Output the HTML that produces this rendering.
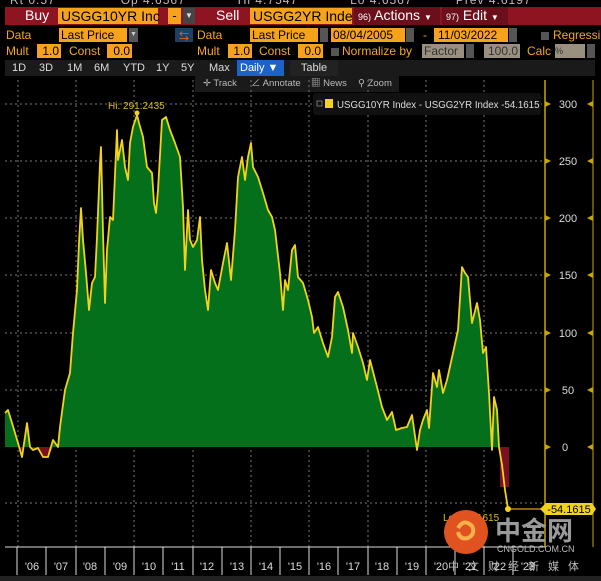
<!DOCTYPE html>
<html><head><meta charset="utf-8"><style>
*{margin:0;padding:0;box-sizing:border-box}
body{width:601px;height:581px;background:#000;overflow:hidden;font-family:"Liberation Sans","Noto Sans CJK SC",sans-serif;position:relative;color:#f5a623}
.a{position:absolute;white-space:nowrap}
.o{background:#f7a21b;color:#000}
.red{background:#8e1422}
.t{font-size:12px}
</style></head><body>
<div class="a" style="top:-7px;left:10px;font-size:12px;color:#bbb;letter-spacing:1px">Rt 0.57 &nbsp;&nbsp;&nbsp;&nbsp;&nbsp;&nbsp;&nbsp;&nbsp;&nbsp;&nbsp;&nbsp;&nbsp;&nbsp;&nbsp;Op 4.6567 &nbsp;&nbsp;&nbsp;&nbsp;&nbsp;&nbsp;&nbsp;&nbsp;&nbsp;&nbsp;&nbsp;Hi 4.7547 &nbsp;&nbsp;&nbsp;&nbsp;&nbsp;&nbsp;&nbsp;&nbsp;&nbsp;&nbsp;&nbsp;Lo 4.6567 &nbsp;&nbsp;&nbsp;&nbsp;&nbsp;&nbsp;&nbsp;&nbsp;&nbsp;Prev 4.6197</div>
<div class="a red" style="top:7px;left:5px;width:596px;height:18px"></div>
<div class="a" style="top:7px;left:25px;font-size:14px;color:#fff">Buy</div>
<div class="a o" style="top:8px;left:58px;width:100px;height:16px;font-size:14px;line-height:16px;padding-left:3px">USGG10YR Inc</div>
<div class="a o" style="top:8px;left:168px;width:13px;height:16px;font-size:13px;text-align:center">-</div>
<div class="a" style="top:8px;left:183px;width:12px;height:16px;background:#444;color:#ddd;font-size:8px;text-align:center;line-height:16px">▼</div>
<div class="a" style="top:7px;left:216px;font-size:14px;color:#fff">Sell</div>
<div class="a o" style="top:8px;left:250px;width:102px;height:16px;font-size:14px;line-height:16px;padding-left:3px;overflow:hidden">USGG2YR Inde</div>
<div class="a" style="top:7px;left:354px;width:86px;height:18px;background:#6b0f1a"></div>
<div class="a" style="top:7px;left:358px;font-size:14px;color:#fff"><span style="font-size:9px">96)</span> Actions <span style="font-size:8px">▼</span></div>
<div class="a" style="top:7px;left:442px;width:66px;height:18px;background:#6b0f1a"></div>
<div class="a" style="top:7px;left:446px;font-size:14px;color:#fff"><span style="font-size:9px">97)</span> Edit <span style="font-size:8px">▼</span></div>

<div class="a t" style="top:28px;left:6px">Data</div>
<div class="a o t" style="top:28px;left:59px;width:68px;height:14px;line-height:14px;padding-left:2px">Last Price</div>
<div class="a" style="top:28px;left:129px;width:9px;height:14px;background:#555;color:#ccc;font-size:7px;line-height:14px;text-align:center">▼</div>
<div class="a" style="top:28px;left:175px;width:18px;height:14px;background:#1d3f66;color:#f60;font-size:10px;text-align:center">⇆</div>
<div class="a t" style="top:28px;left:197px">Data</div>
<div class="a o t" style="top:28px;left:250px;width:68px;height:14px;line-height:14px;padding-left:2px">Last Price</div>
<div class="a" style="top:28px;left:320px;width:8px;height:14px;background:#555"></div>
<div class="a o t" style="top:28px;left:331px;width:74px;height:14px;line-height:14px;padding-left:2px">08/04/2005</div>
<div class="a" style="top:28px;left:406px;width:8px;height:14px;background:#555"></div>
<div class="a t" style="top:28px;left:423px">-</div>
<div class="a o t" style="top:28px;left:434px;width:74px;height:14px;line-height:14px;padding-left:4px">11/03/2022</div>
<div class="a" style="top:28px;left:509px;width:8px;height:14px;background:#555"></div>
<div class="a" style="top:32px;left:541px;width:8px;height:8px;background:#555"></div>
<div class="a t" style="top:28px;left:553px">Regressi</div>

<div class="a t" style="top:44px;left:6px">Mult</div>
<div class="a o t" style="top:44px;left:37px;width:24px;height:14px;line-height:14px;text-align:right;padding-right:2px">1.0</div>
<div class="a t" style="top:44px;left:69px">Const</div>
<div class="a o t" style="top:44px;left:107px;width:25px;height:14px;line-height:14px;text-align:right;padding-right:2px">0.0</div>
<div class="a t" style="top:44px;left:197px">Mult</div>
<div class="a o t" style="top:44px;left:228px;width:24px;height:14px;line-height:14px;text-align:right;padding-right:2px">1.0</div>
<div class="a t" style="top:44px;left:259px">Const</div>
<div class="a o t" style="top:44px;left:298px;width:25px;height:14px;line-height:14px;text-align:right;padding-right:2px">0.0</div>
<div class="a" style="top:48px;left:331px;width:8px;height:8px;background:#555"></div>
<div class="a t" style="top:44px;left:342px">Normalize by</div>
<div class="a t" style="top:44px;left:422px;width:42px;height:14px;background:#9a9080;color:#333;line-height:14px;padding-left:2px">Factor</div>
<div class="a" style="top:44px;left:466px;width:8px;height:14px;background:#555"></div>
<div class="a t" style="top:44px;left:484px;width:36px;height:14px;background:#9a9080;color:#333;line-height:14px;text-align:right;padding-right:2px">100.0</div>
<div class="a t" style="top:44px;left:527px">Calc</div>
<div class="a t" style="top:44px;left:555px;width:30px;height:14px;background:#9a9080;color:#333;font-size:9px;line-height:14px">%</div>
<div class="a" style="top:44px;left:587px;width:8px;height:14px;background:#555"></div>

<div class="a" style="top:60px;left:5px;width:590px;height:16px;background:#1a1a1a"></div>
<div class="a" style="top:60px;left:5px;height:16px;font-size:11px;color:#ddd;line-height:16px">
<span style="position:absolute;left:7px">1D</span><span style="position:absolute;left:34px">3D</span><span style="position:absolute;left:62px">1M</span><span style="position:absolute;left:89px">6M</span><span style="position:absolute;left:118px">YTD</span><span style="position:absolute;left:151px">1Y</span><span style="position:absolute;left:176px">5Y</span><span style="position:absolute;left:204px">Max</span></div>
<div class="a" style="top:60px;left:237px;width:47px;height:16px;background:#1d62c6;color:#fff;font-size:11px;line-height:16px;padding-left:3px">Daily ▼</div>
<div class="a" style="top:60px;left:290px;width:48px;height:16px;background:#222;color:#ddd;font-size:11px;line-height:16px;text-align:center">Table</div>
<div class="a" style="top:76px;left:195px;width:204px;height:16px;background:#1a1a1a;color:#bbb;font-size:9.5px;line-height:16px">
<span style="position:absolute;left:8px">✛ Track</span><span style="position:absolute;left:56px">∠ Annotate</span><span style="position:absolute;left:116px">▦ News</span><span style="position:absolute;left:163px">⚲ Zoom</span></div>

<svg class="a" style="top:0;left:0" width="601" height="581">
<defs>
<clipPath id="up"><rect x="0" y="80" width="545" height="367"/></clipPath>
<clipPath id="dn"><rect x="0" y="447" width="545" height="100"/></clipPath>
</defs>
<g stroke="#777" stroke-dasharray="2,3" stroke-width="1">
<line x1="5" y1="104" x2="545" y2="104"/><line x1="5" y1="161" x2="545" y2="161"/><line x1="5" y1="218" x2="545" y2="218"/><line x1="5" y1="275" x2="545" y2="275"/><line x1="5" y1="333" x2="545" y2="333"/><line x1="5" y1="390" x2="545" y2="390"/><line x1="5" y1="503" x2="545" y2="503"/>
<line x1="18" y1="80" x2="18" y2="547"/><line x1="76" y1="80" x2="76" y2="547"/><line x1="134" y1="80" x2="134" y2="547"/><line x1="193" y1="80" x2="193" y2="547"/><line x1="251" y1="80" x2="251" y2="547"/><line x1="309" y1="80" x2="309" y2="547"/><line x1="368" y1="80" x2="368" y2="547"/><line x1="426" y1="80" x2="426" y2="547"/><line x1="484" y1="80" x2="484" y2="547"/>
</g>
<polygon points="5,447 5,413 8,410 12,423 15,433 18,443 22,457 25,437 27,423 30,447 33,450 38,448 43,457 48,457 53,440 58,447 60,427 65,390 70,373 73,333 77,290 79,243 81,208 83,240 86,273 89,310 92,283 95,277 97,237 100,163 101,147 103,233 105,303 107,250 110,217 113,220 117,130 118,160 122,140 125,167 128,180 130,143 133,127 137,115 139,123 143,137 147,167 152,173 154,203 156,213 158,190 162,120 166,117 170,130 175,143 180,157 183,207 185,270 188,210 190,240 193,247 197,240 200,217 202,260 205,290 208,310 211,270 215,283 218,290 223,263 227,243 231,280 235,230 238,177 242,157 245,180 248,157 251,143 253,167 258,177 263,193 268,210 272,217 275,230 280,273 283,310 285,280 288,290 292,250 295,245 298,277 303,283 308,300 312,317 314,333 318,327 323,343 328,357 332,337 335,297 338,292 343,307 348,330 352,353 353,333 358,347 363,363 367,380 370,360 377,387 382,407 387,420 392,412 396,430 402,428 407,427 412,415 417,450 420,430 423,420 427,410 429,428 433,373 437,387 439,370 443,393 447,380 453,353 458,330 462,267 465,273 468,277 472,323 477,303 480,320 483,353 486,347 489,393 492,450 494,397 497,410 499,447 510,447" fill="#05701b" clip-path="url(#up)"/>
<polygon points="30,447 33,450 38,448 43,457 48,457 53,447" fill="#7a1020"/>
<polygon points="20,447 22,457 24,447" fill="#7a1020"/>
<rect x="500" y="447" width="9" height="40" fill="#7a1020"/>
<polyline fill="none" stroke="#f2d21a" stroke-width="1.8" stroke-linejoin="round" points="5,413 8,410 12,423 15,433 18,443 22,457 25,437 27,423 30,447 33,450 38,448 43,457 48,457 53,440 58,447 60,427 65,390 70,373 73,333 77,290 79,243 81,208 83,240 86,273 89,310 92,283 95,277 97,237 100,163 101,147 103,233 105,303 107,250 110,217 113,220 117,130 118,160 122,140 125,167 128,180 130,143 133,127 137,115 139,123 143,137 147,167 152,173 154,203 156,213 158,190 162,120 166,117 170,130 175,143 180,157 183,207 185,270 188,210 190,240 193,247 197,240 200,217 202,260 205,290 208,310 211,270 215,283 218,290 223,263 227,243 231,280 235,230 238,177 242,157 245,180 248,157 251,143 253,167 258,177 263,193 268,210 272,217 275,230 280,273 283,310 285,280 288,290 292,250 295,245 298,277 303,283 308,300 312,317 314,333 318,327 323,343 328,357 332,337 335,297 338,292 343,307 348,330 352,353 353,333 358,347 363,363 367,380 370,360 377,387 382,407 387,420 392,412 396,430 402,428 407,427 412,415 417,450 420,430 423,420 427,410 429,428 433,373 437,387 439,370 443,393 447,380 453,353 458,330 462,267 465,273 468,277 472,323 477,303 480,320 483,353 486,347 489,393 492,450 494,397 497,410 499,447 502,465 505,490 508,509"/>
<line x1="508" y1="509" x2="545" y2="509" stroke="#b8860b" stroke-width="1.5"/>
<circle cx="508" cy="509" r="3" fill="#f2d21a"/>
<circle cx="137" cy="113" r="2.5" fill="#f2d21a"/>
<text x="108" y="109" fill="#d8b814" font-size="10" font-family="Liberation Sans">Hi: 291.2435</text>
<text x="443" y="521" fill="#d8b814" font-size="10" font-family="Liberation Sans">Lo: -54.1615</text>
<line x1="545" y1="80" x2="545" y2="547" stroke="#c9a600" stroke-width="1.5"/>
<line x1="593" y1="80" x2="593" y2="547" stroke="#c9a600" stroke-width="1"/>
<g fill="#c9a600">
<polygon points="545,101 551,104 545,107"/><polygon points="545,158 551,161 545,164"/><polygon points="545,215 551,218 545,221"/><polygon points="545,272 551,275 545,278"/><polygon points="545,330 551,333 545,336"/><polygon points="545,387 551,390 545,393"/><polygon points="545,444 551,447 545,450"/>
<polygon points="593,101 587,104 593,107"/><polygon points="593,158 587,161 593,164"/><polygon points="593,215 587,218 593,221"/><polygon points="593,272 587,275 593,278"/><polygon points="593,330 587,333 593,336"/><polygon points="593,387 587,390 593,393"/><polygon points="593,444 587,447 593,450"/>
</g>
<g fill="#ddd" font-size="11" font-family="Liberation Sans" text-anchor="middle">
<text x="568" y="108">300</text><text x="568" y="165">250</text><text x="568" y="222">200</text><text x="568" y="279">150</text><text x="568" y="337">100</text><text x="568" y="394">50</text><text x="565" y="451">0</text>
</g>
<polygon points="540,509 546,503 592,503 596,509 592,515 546,515" fill="#f2d21a"/>
<text x="569" y="513" fill="#000" font-size="11" font-family="Liberation Sans" text-anchor="middle">-54.1615</text>
<line x1="5" y1="547" x2="545" y2="547" stroke="#ddd" stroke-width="1"/>
<g stroke="#ddd"><line x1="17" y1="547" x2="17" y2="575"/><line x1="46" y1="547" x2="46" y2="575"/><line x1="76" y1="547" x2="76" y2="575"/><line x1="105" y1="547" x2="105" y2="575"/><line x1="134" y1="547" x2="134" y2="575"/><line x1="163" y1="547" x2="163" y2="575"/><line x1="193" y1="547" x2="193" y2="575"/><line x1="222" y1="547" x2="222" y2="575"/><line x1="251" y1="547" x2="251" y2="575"/><line x1="280" y1="547" x2="280" y2="575"/><line x1="309" y1="547" x2="309" y2="575"/><line x1="338" y1="547" x2="338" y2="575"/><line x1="368" y1="547" x2="368" y2="575"/><line x1="397" y1="547" x2="397" y2="575"/><line x1="426" y1="547" x2="426" y2="575"/><line x1="455" y1="547" x2="455" y2="575"/><line x1="484" y1="547" x2="484" y2="575"/><line x1="513" y1="547" x2="513" y2="575"/></g>
<g fill="#ddd" font-size="11" font-family="Liberation Sans" text-anchor="middle">
<text x="32" y="570">'06</text><text x="61" y="570">'07</text><text x="90" y="570">'08</text><text x="120" y="570">'09</text><text x="149" y="570">'10</text><text x="178" y="570">'11</text><text x="207" y="570">'12</text><text x="237" y="570">'13</text><text x="266" y="570">'14</text><text x="295" y="570">'15</text><text x="324" y="570">'16</text><text x="353" y="570">'17</text><text x="382" y="570">'18</text><text x="412" y="570">'19</text><text x="441" y="570">'20</text><text x="470" y="570">'21</text><text x="499" y="570">'22</text><text x="528" y="570">'23</text></g>
<rect x="0" y="576" width="601" height="5" fill="#222"/>
<rect x="313" y="93" width="228" height="22" rx="3" fill="#111"/>
<rect x="317" y="101" width="5" height="5" fill="none" stroke="#888" stroke-width="0.8"/>
<rect x="325" y="99" width="8" height="9" fill="#f2d21a"/>
<text x="337" y="108" fill="#ddd" font-size="9.7" font-family="Liberation Sans">USGG10YR Index - USGG2YR Index -54.1615</text>
<circle cx="466" cy="532" r="22" fill="#e0521f"/>
<path d="M458,528 q6,-10 14,-2 q4,8 -4,12 q-8,2 -10,-6" fill="none" stroke="#f6b24a" stroke-width="4"/>
<text x="495" y="540" fill="#9a9a9a" font-size="26" font-weight="bold" font-family="Noto Sans CJK SC,sans-serif">中金网</text>
<text x="497" y="552" fill="#bbb" font-size="9" font-family="Liberation Sans">CNGOLD.COM.CN</text>
<text x="448" y="570" fill="#bbb" font-size="11" font-family="Noto Sans CJK SC,sans-serif" letter-spacing="9">中文财经新媒体</text>
</svg>
</body></html>
